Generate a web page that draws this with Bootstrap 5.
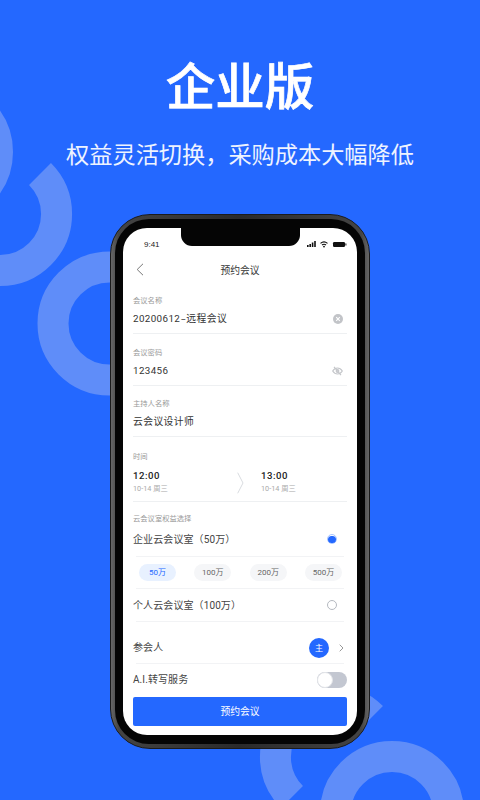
<!doctype html>
<html lang="zh">
<head>
<meta charset="utf-8">
<title>企业版</title>
<link href="https://cdn.jsdelivr.net/npm/bootstrap@5.3.0/dist/css/bootstrap.min.css" rel="stylesheet">
<style>
html,body{margin:0;height:800px;overflow:hidden}
body{background:#2468ff;font-family:"Noto Sans CJK SC","Noto Sans",sans-serif;color:#333;position:relative;width:480px}
.deco{position:absolute;left:0;top:0;width:480px;height:800px}
.page{position:relative;display:flex;flex-direction:column;align-items:center;height:800px}
.hero-title{font-size:49.5px;line-height:48px;font-weight:500;-webkit-text-stroke:.7px #fff;color:#fff;margin:60px 0 0}
.hero-sub{font-size:23.2px;line-height:30px;color:#eef3ff;margin:30px 0 0;font-weight:400;white-space:nowrap}
.shell{width:260px;height:535px;margin:46px 1px 0 0;border-radius:40px;background:linear-gradient(90deg,#666,#444 3%,#2a2a2a 50%,#444 97%,#666);border:1.5px solid #1b1b1b;padding:4px 4px}
.bezel{height:100%;background:#050505;border-radius:34px;padding:8.5px 6.5px 8.5px 8.5px}
.screen{height:507px;width:234px;background:#fff;border-radius:24px;position:relative;overflow:hidden;display:flex;flex-direction:column}
.notch{position:absolute;top:0;left:57.5px;width:119px;height:18px;background:#050505;border-radius:0 0 11px 11px}
.status{height:29px;padding:12px 10px 0 21px;font-size:8px;line-height:10px;font-family:"Liberation Sans",sans-serif;color:#222}
.navrow{height:26px;position:relative;font-size:9.8px;line-height:26px;text-align:center;color:#333}
.backic{position:absolute;left:13px;top:6px}
.fields{padding:0 10px}
.fld{height:51.5px;border-bottom:1px solid #eef0f2;padding-top:12.5px}
.lbl{font-size:7.3px;line-height:10px;color:#999}
.val{font-size:9.8px;line-height:14px;margin-top:7px;color:#333;letter-spacing:.4px;font-family:Roboto,"Noto Sans CJK SC",sans-serif}
.dashx{display:inline-block;transform:scaleX(1.7);margin:0 1.5px}
.fld-time{height:65px;padding-top:13.5px}
.hm{font-size:9.6px;line-height:14px;margin-top:8px;letter-spacing:.5px;color:#222;font-weight:500;font-family:Roboto,sans-serif}
.dt{font-size:7.3px;line-height:10px;margin-top:1px;color:#aaa;font-family:Roboto,"Noto Sans CJK SC",sans-serif}
.tcol{width:104px}
.tcol2{width:86px}
.tarrow{width:24px;padding-top:8px}
.sect{padding-top:11px}
.optrow{height:33px;margin:0 3px;border-bottom:1px solid #f2f3f5;padding:0 7px 0 0}
.opt{font-size:10px;letter-spacing:.1px;color:#444;margin-left:-3px;font-family:Roboto,"Noto Sans CJK SC",sans-serif;line-height:14px;padding-top:1px}
.optrow1{height:33.5px}
.pills{height:32.5px;margin:0 3px;border-bottom:1px solid #f2f3f5;padding:0 2px 0 3px}
.pillx{width:37px;height:17px;border-radius:9px;background:#f5f6f8;color:#666;font-size:8px;line-height:17px;text-align:center;font-family:Roboto,"Noto Sans CJK SC",sans-serif}
.pillx.on{background:#e8f1ff;color:#2468ff}
.radx{width:10px;height:10px;border-radius:50%;border:1px solid #b5b9c0;background:#fff}
.radx.on{border-color:#a9c6ff;display:flex;align-items:center;justify-content:center}
.radx.on i{display:block;width:7.5px;height:7.5px;border-radius:50%;background:#2468ff}
.people{height:42px;margin:0 3px;border-bottom:1px solid #f2f3f5;padding:10px 0 0 0}
.ava{width:20px;height:20px;border-radius:50%;background:#2468ff;color:#fff;font-size:8px;line-height:20px;text-align:center}
.chev{margin-left:2px}
.airow{height:32px;margin-left:3px;padding-bottom:1px}
.tog{width:30px;height:16px;border-radius:8px;background:#c3c7d1;position:relative}
.tog i{position:absolute;left:0;top:0;width:16px;height:16px;border-radius:50%;background:#fff;border:1px solid #e3e5e9}
.mainbtn{display:block;width:214px;height:29px;padding:0;margin-top:.5px;background:#2468ff;border:0;border-radius:2px;color:#fff;font-size:9.8px;line-height:29px;text-align:center}
</style>
</head>
<body>
<svg class="deco" viewBox="0 0 480 800" fill="none" stroke="#5f8df9" stroke-width="31" aria-hidden="true">
  <circle cx="-59" cy="152" r="56.5"/>
  <path d="M40 174A56.5 56.5 0 1 1 -40 254" />
  <circle cx="109.5" cy="323.5" r="56.5"/>
  <path d="M372 717A56.5 56.5 0 0 0 292 797"/>
  <circle cx="392" cy="813" r="56.5"/>
</svg>
<main class="page">
  <h1 class="hero-title">企业版</h1>
  <p class="hero-sub">权益灵活切换，采购成本大幅降低</p>
  <div class="shell">
    <div class="bezel">
      <div class="screen">
        <div class="notch"></div>
        <div class="status d-flex justify-content-between">
          <span>9:41</span>
          <svg width="40" height="8" viewBox="0 0 40 8">
            <g fill="#111">
              <rect x="0" y="5" width="1.6" height="2"/><rect x="2.4" y="4" width="1.6" height="3"/><rect x="4.8" y="2.5" width="1.6" height="4.5"/><rect x="7.2" y="1" width="1.6" height="6"/>
              <rect x="26" y="2" width="12" height="5" rx="1.2"/><rect x="38.4" y="3.5" width="1" height="2"/>
            </g>
            <path d="M13.5 3.3a5.5 5.5 0 0 1 7 0M15 5a3.2 3.2 0 0 1 4 0" stroke="#111" stroke-width="1.1" fill="none"/>
            <circle cx="17" cy="6.6" r=".9" fill="#111"/>
          </svg>
        </div>
        <div class="navrow">
          <svg class="backic" width="8" height="13" viewBox="0 0 8 13"><path d="M7 .8 1.2 6.5 7 12.2" fill="none" stroke="#777" stroke-width="1"/></svg>
          预约会议
        </div>
        <div class="fields">
          <div class="fld">
            <div class="lbl">会议名称</div>
            <div class="val d-flex justify-content-between align-items-center"><span>20200612<span class="dashx">-</span>远程会议</span>
              <svg class="me-1" width="10" height="10" viewBox="0 0 10 10"><circle cx="5" cy="5" r="5" fill="#c2c4c8"/><path d="M3.200 3.200l3.600 3.600M6.800 3.200 3.200 6.800" stroke="#fff" stroke-width="1.100"/></svg>
            </div>
          </div>
          <div class="fld">
            <div class="lbl">会议密码</div>
            <div class="val d-flex justify-content-between align-items-center"><span>123456</span>
              <svg class="me-1" width="11" height="10" viewBox="0 0 11 10" fill="none" stroke="#c4c6ca" stroke-width="1.200"><path d="M.7 5C2 3 3.600 2 5.500 2s3.500 1 4.800 3C9 7 7.400 8 5.500 8S2 7 .7 5z"/><circle cx="5.500" cy="5" r="1.300"/><path d="M2 .8l7 8.400"/></svg>
            </div>
          </div>
          <div class="fld">
            <div class="lbl">主持人名称</div>
            <div class="val">云会议设计师</div>
          </div>
          <div class="fld fld-time">
            <div class="lbl">时间</div>
            <div class="d-flex">
              <div class="tcol"><div class="hm">12:00</div><div class="dt">10-14 周三</div></div>
              <div class="tarrow"><svg width="7" height="22" viewBox="0 0 7 22"><path d="M.7.7 6 11 .7 21.300" fill="none" stroke="#d9dce0" stroke-width="1"/></svg></div>
              <div class="tcol2"><div class="hm">13:00</div><div class="dt">10-14 周三</div></div>
            </div>
          </div>
          <div class="sect lbl">云会议室权益选择</div>
        </div>
        <div class="fields">
          <div class="optrow optrow1 d-flex justify-content-between align-items-center">
            <span class="opt">企业云会议室（50万）</span>
            <span class="radx on"><i></i></span>
          </div>
          <div class="pills d-flex justify-content-between align-items-center">
            <span class="pillx on">50万</span><span class="pillx">100万</span><span class="pillx">200万</span><span class="pillx">500万</span>
          </div>
          <div class="optrow d-flex justify-content-between align-items-center">
            <span class="opt">个人云会议室（100万）</span>
            <span class="radx"></span>
          </div>
          <div class="people d-flex justify-content-between align-items-center">
            <span class="opt">参会人</span>
            <span class="d-flex align-items-center gap-2">
              <span class="ava">主</span>
              <svg class="chev" width="5" height="8" viewBox="0 0 5 8"><path d="M.7.7 4 4 .7 7.300" fill="none" stroke="#999" stroke-width="1"/></svg>
            </span>
          </div>
          <div class="airow d-flex justify-content-between align-items-center">
            <span class="opt">A.I.转写服务</span>
            <span class="tog"><i></i></span>
          </div>
          <button type="button" class="btn mainbtn">预约会议</button>
        </div>
      </div>
    </div>
  </div>
</main>
<script src="https://cdn.jsdelivr.net/npm/bootstrap@5.3.0/dist/js/bootstrap.bundle.min.js"></script>
</body>
</html>
